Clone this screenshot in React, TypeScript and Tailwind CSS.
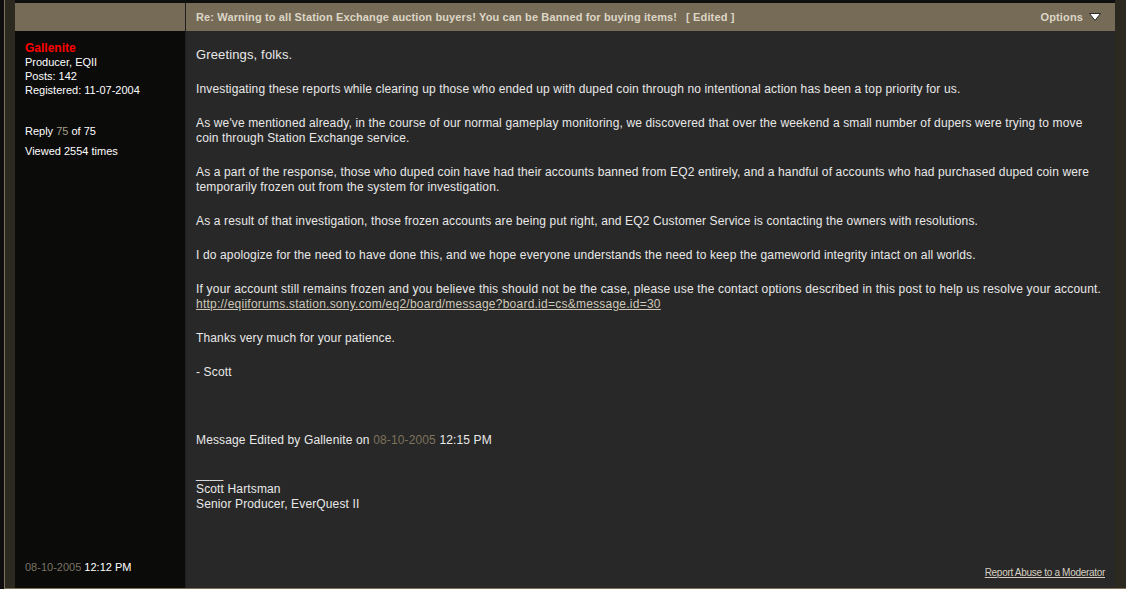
// App.tsx
const paragraphs: string[] = [
  "Investigating these reports while clearing up those who ended up with duped coin through no intentional action has been a top priority for us.",
  "As we've mentioned already, in the course of our normal gameplay monitoring, we discovered that over the weekend a small number of dupers were trying to move coin through Station Exchange service.",
  "As a part of the response, those who duped coin have had their accounts banned from EQ2 entirely, and a handful of accounts who had purchased duped coin were temporarily frozen out from the system for investigation.",
  "As a result of that investigation, those frozen accounts are being put right, and EQ2 Customer Service is contacting the owners with resolutions.",
  "I do apologize for the need to have done this, and we hope everyone understands the need to keep the gameworld integrity intact on all worlds.",
];

function OptionsArrow() {
  return (
    <svg width="12" height="8" viewBox="0 0 12 8" className="ml-[6px]">
      <polygon points="0.5,0.5 11.5,0.5 6,7.5" fill="#ffffff" stroke="#2a2a2a" strokeWidth="1" />
    </svg>
  );
}

export default function App() {
  return (
    <div className="h-[589px] w-full overflow-hidden bg-[#0e0e0e] pl-[4px] font-['Liberation_Sans',Arial,sans-serif]">
      <div className="flex h-full border-b border-l border-[#7d7259] bg-[#2c2920] pl-[10px] pr-[11px]">
        <div className="flex w-full flex-col bg-[#0f0f0f] pt-[3px]">
          {/* header row */}
          <div className="flex h-[28px] bg-[#756b57]">
            <div className="w-[171px] shrink-0 border-r border-[#1e1e1e]" />
            <div className="flex flex-1 items-center justify-between pl-[10px] pr-[14px] text-[11px] font-bold tracking-[0.13px] text-[#ddd6c6]">
              <div>
                Re: Warning to all Station Exchange auction buyers! You can be Banned for buying items!
                <span className="ml-[9px]">[ Edited ]</span>
              </div>
              <div className="flex items-center">
                Options
                <OptionsArrow />
              </div>
            </div>
          </div>

          {/* body row */}
          <div className="flex flex-1">
            <div className="flex w-[171px] shrink-0 flex-col justify-between border-r border-[#1e1e1e] bg-[#0b0b0a] pb-[14px] pl-[10px] pt-[10px] text-[11px] leading-[14px] text-white">
              <div>
                <div className="text-[12px] font-bold text-[#ff0000]">Gallenite</div>
                <div>Producer, EQII</div>
                <div>Posts: 142</div>
                <div>Registered: 11-07-2004</div>
                <div className="mt-[27px]">
                  Reply <span className="text-[#a89f8a]">75</span> of 75
                </div>
                <div className="mt-[6px]">Viewed 2554 times</div>
              </div>
              <div>
                <span className="text-[#7a7263]">08-10-2005</span> 12:12 PM
              </div>
            </div>

            <div className="flex flex-1 flex-col justify-between bg-[#282828] pb-[9px] pl-[10px] pr-[10px] pt-[16px] text-[12px] leading-[15px] tracking-[0.14px] text-[#e8e8e8]">
              <div>
                <p className="mb-[20px] text-[13px]">Greetings, folks.</p>
                {paragraphs.map((p, i) => (
                  <p key={i} className="mb-[19px]">
                    {p}
                  </p>
                ))}
                <p className="mb-[19px]">
                  <span className="tracking-[0.19px]">
                    If your account still remains frozen and you believe this should not be the case, please use the contact options described in this post to help us resolve your account.
                  </span>
                  <br />
                  <a className="tracking-[0.24px] text-[#cfc8b8] underline" href="#">
                    http://eqiiforums.station.sony.com/eq2/board/message?board.id=cs&amp;message.id=30
                  </a>
                </p>
                <p className="mb-[19px]">Thanks very much for your patience.</p>
                <p className="mb-[19px]">- Scott</p>
                <p className="mb-[19px]">&nbsp;</p>
                <p className="mb-[19px]">
                  Message Edited by Gallenite on <span className="text-[#7d725c]">08-10-2005</span> 12:15 PM
                </p>
                <p>
                  ____
                  <br />
                  Scott Hartsman
                  <br />
                  Senior Producer, EverQuest II
                </p>
              </div>
              <div className="flex justify-end">
                <a className="text-[10px] leading-[12px] tracking-[-0.3px] text-[#d6cfc0] underline" href="#">
                  Report Abuse to a Moderator
                </a>
              </div>
            </div>
          </div>
        </div>
      </div>
    </div>
  );
}
